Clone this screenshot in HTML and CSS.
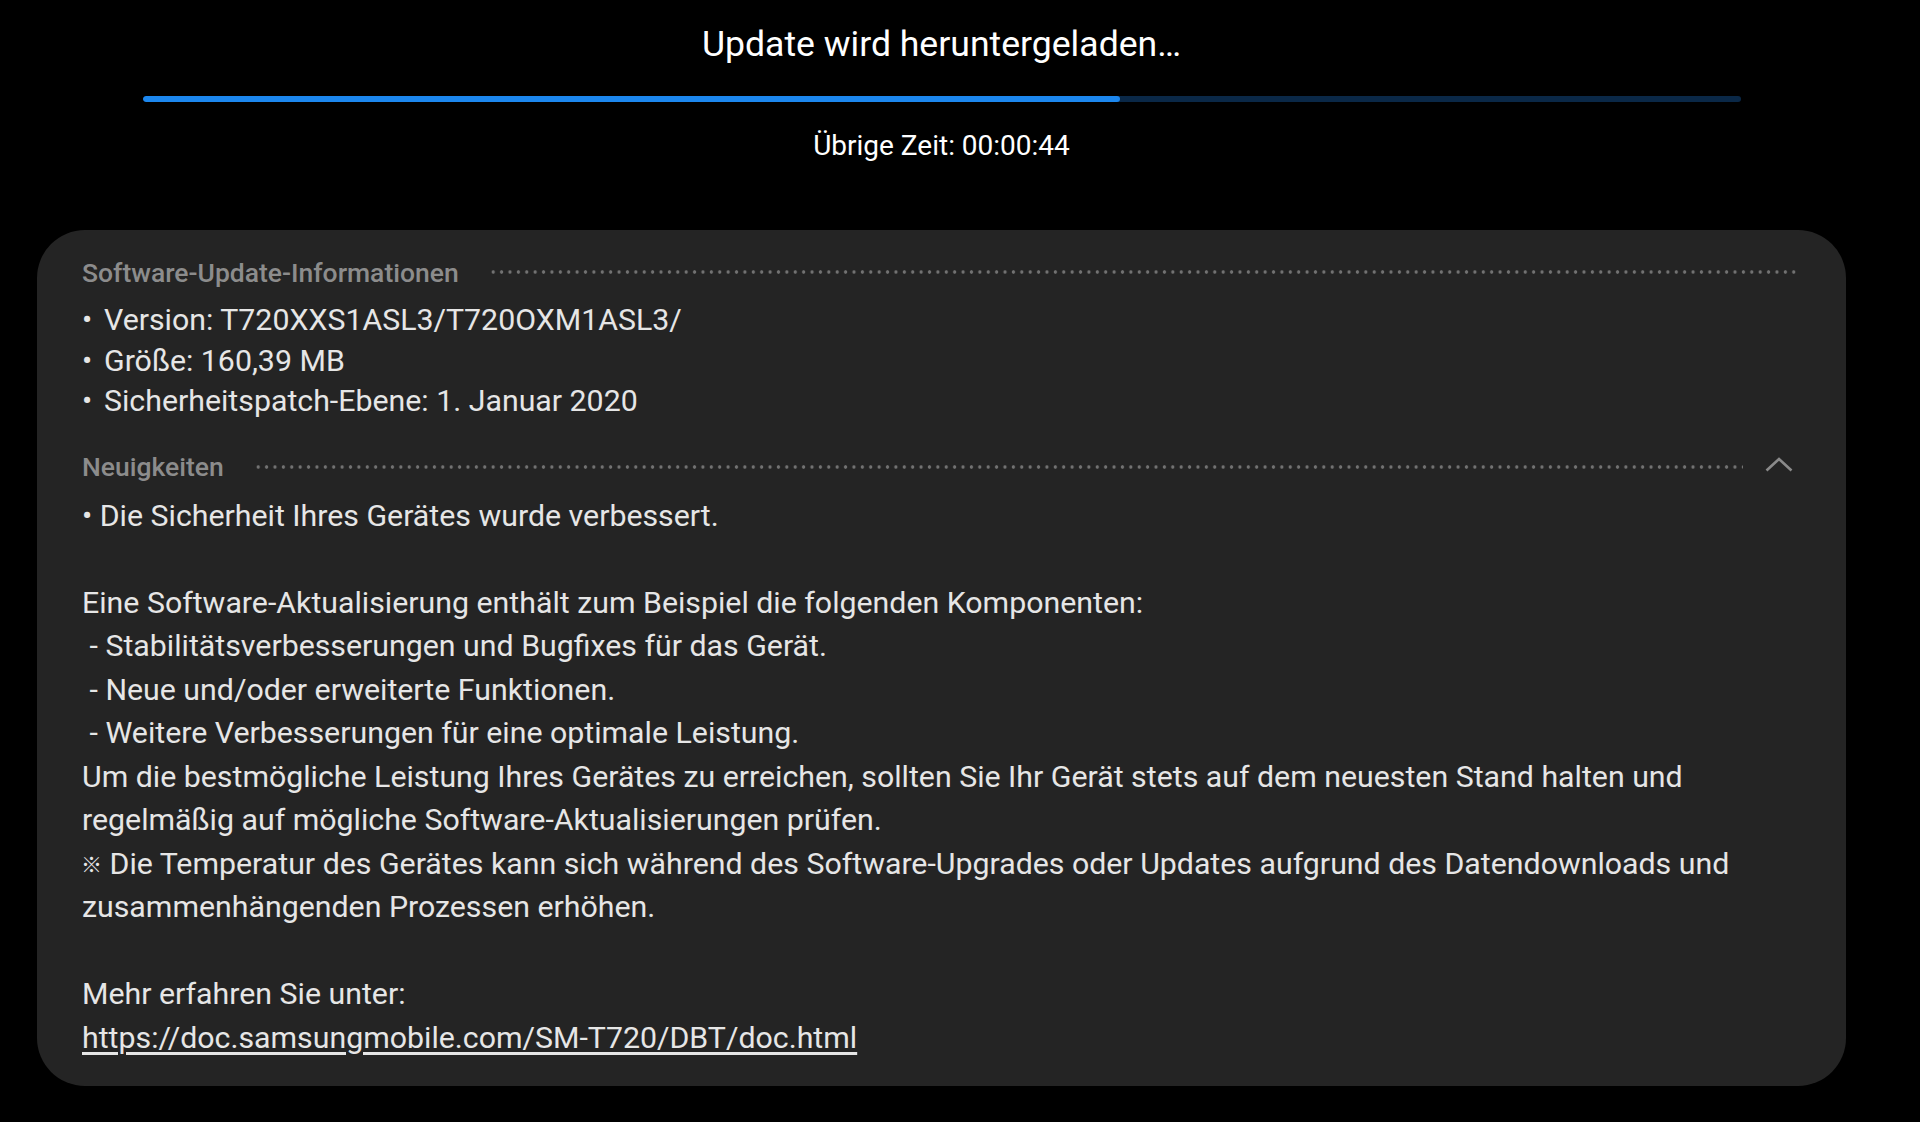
FILE: index.html
```html
<!DOCTYPE html>
<html lang="de">
<head>
  <meta charset="UTF-8" />
  <meta name="viewport" content="width=device-width, initial-scale=1.0"/>
  <title>Software-Update</title>
  <link rel="stylesheet" href="styles.css">
</head>
<body>
  <div class="page">
    <header class="status">
      <h1 class="status-title">Update wird heruntergeladen…</h1>
      <div class="progress">
        <div class="progress-fill" style="width: 61.2%"></div>
      </div>
      <p class="status-time">Übrige Zeit: 00:00:44</p>
    </header>

    <section class="card">
      <div class="section-head">
        <span class="section-label">Software-Update-Informationen</span>
        <span class="dots"></span>
      </div>
      <ul class="info-list">
        <li>Version: T720XXS1ASL3/T720OXM1ASL3/</li>
        <li>Größe: 160,39 MB</li>
        <li>Sicherheitspatch-Ebene: 1. Januar 2020</li>
      </ul>

      <div class="section-head news-head">
        <span class="section-label">Neuigkeiten</span>
        <span class="dots"></span>
        <svg class="chevron" width="32" height="20" viewBox="0 0 32 20">
          <polyline points="3.5,14.5 16,3 28.5,14.5" fill="none" stroke="#8a8a8a" stroke-width="2.6"/>
        </svg>
      </div>
      <div class="news-text">• Die Sicherheit Ihres Gerätes wurde verbessert.

Eine Software-Aktualisierung enthält zum Beispiel die folgenden Komponenten:
 - Stabilitätsverbesserungen und Bugfixes für das Gerät.
 - Neue und/oder erweiterte Funktionen.
 - Weitere Verbesserungen für eine optimale Leistung.
Um die bestmögliche Leistung Ihres Gerätes zu erreichen, sollten Sie Ihr Gerät stets auf dem neuesten Stand halten und regelmäßig auf mögliche Software-Aktualisierungen prüfen.
<span class="note-mark">※</span> Die Temperatur des Gerätes kann sich während des Software-Upgrades oder Updates aufgrund des Datendownloads und zusammenhängenden Prozessen erhöhen.

Mehr erfahren Sie unter:
<a href="#" class="news-link">https://doc.samsungmobile.com/SM-T720/DBT/doc.html</a></div>
    </section>
  </div>
</body>
</html>
```

FILE: styles.css
```css
:root {
  --color-fondo: #000;
  --color-card: #242424;
  --color-texto: #e6e6e6;
  --color-gris: #8c8c8c;
  --color-azul: #1c87ee;
}

body {
  font-family: Roboto, 'Noto Sans', sans-serif;
  background-color: var(--color-fondo);
  color: var(--color-texto);
  margin: 0;
  padding: 0;
}

.page {
  width: 1809px;
  margin-left: 37px;
  padding-bottom: 37px;
}

.status {
  display: flex;
  flex-direction: column;
  align-items: center;
}

.status-title {
  margin: 24px 0 0;
  font-size: 35.6px;
  line-height: 40px;
  font-weight: 400;
  color: #fff;
}

.progress {
  width: 1598px;
  height: 6px;
  margin-top: 32px;
  border-radius: 3px;
  background-color: #0a2847;
  overflow: hidden;
}

.progress-fill {
  height: 100%;
  border-radius: 3px;
  background-color: var(--color-azul);
}

.status-time {
  margin: 28px 0 0;
  font-size: 28px;
  line-height: 32px;
  color: #fff;
}

.card {
  margin-top: 68px;
  padding: 24px 47px 27px 45px;
  background-color: var(--color-card);
  border-radius: 48px;
}

.section-head {
  display: flex;
  align-items: center;
  height: 36px;
}

.section-label {
  font-size: 26.5px;
  font-weight: 500;
  color: var(--color-gris);
  white-space: nowrap;
}

.dots {
  flex: 1;
  height: 4px;
  margin-left: 30px;
  background-image: radial-gradient(circle, #727272 1.4px, transparent 2px);
  background-size: 8.4px 4px;
  background-repeat: repeat-x;
}

.chevron {
  margin-left: 20px;
  margin-right: 4px;
  margin-bottom: 2px;
  flex-shrink: 0;
}

.info-list {
  list-style: none;
  margin: 10px 0 0;
  padding: 0;
}

.info-list li {
  position: relative;
  padding-left: 22px;
  font-size: 30.3px;
  line-height: 40.6px;
}

.info-list li::before {
  content: "•";
  position: absolute;
  left: 0;
}

.news-head {
  margin-top: 27px;
}

.news-text {
  margin-top: 9px;
  font-size: 30.3px;
  line-height: 43.5px;
  white-space: pre-wrap;
}

.note-mark {
  display: inline-block;
  font-family: 'Noto Sans CJK JP', sans-serif;
  font-size: 21px;
  font-weight: 700;
  line-height: 1;
  vertical-align: 2px;
  margin-left: -1px;
}

.news-link {
  color: var(--color-texto);
  text-decoration: underline;
  text-underline-offset: 4px;
}
```
